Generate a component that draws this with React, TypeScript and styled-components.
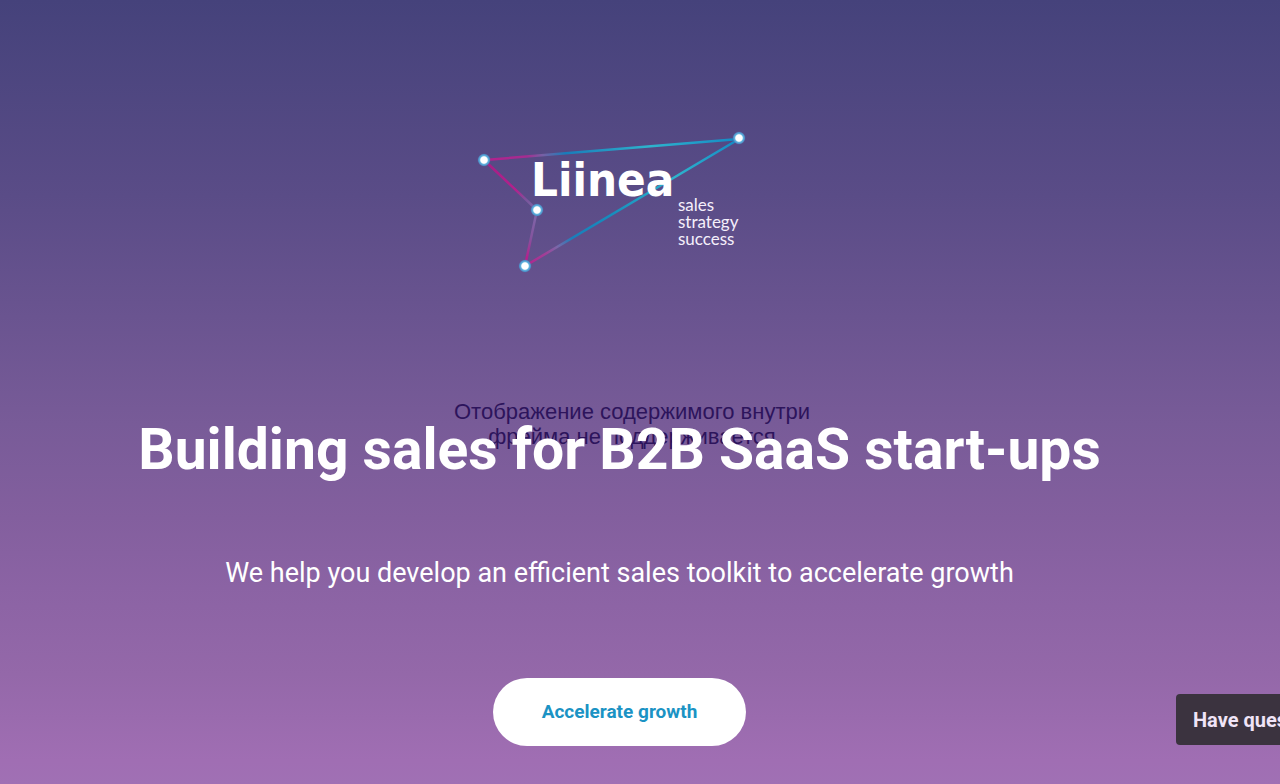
import React from "react";
import styled, { createGlobalStyle } from "styled-components";

const GlobalStyle = createGlobalStyle`
  *, *::before, *::after { box-sizing: border-box; }
  body {
    margin: 0;
    font-family: Roboto, "Open Sans", sans-serif;
  }
`;

const Hero = styled.main`
  position: relative;
  min-height: 100vh;
  padding: 126px 41px 38px 0;
  display: flex;
  flex-direction: column;
  align-items: center;
  overflow: hidden;
  color: #fff;
  text-align: center;
  background: linear-gradient(180deg, #45427b 0%, #5a4c87 25%, #785b98 54%, #835f9e 66%, #8b63a4 75%, #9468a9 86%, #a06eb3 97%, #a070b4 100%);
`;

const Logo = styled.svg`
  display: block;
  width: 280px;
  height: 152px;
  flex: none;
  overflow: visible;
`;

const Wordmark = styled.text`
  font: 700 47px "DejaVu Sans Condensed", "DejaVu Sans", sans-serif;
  fill: #fff;
`;

const Tagline = styled.text`
  font: 400 17px Lato, sans-serif;
  fill: #f5effb;
`;

const FrameNotice = styled.p`
  position: absolute;
  top: 399px;
  left: 0;
  right: 16px;
  margin: 0 auto;
  width: 360px;
  font: 400 22px/25px "Liberation Sans", Arial, sans-serif;
  color: #2d145c;
`;

const Title = styled.h1`
  position: relative;
  margin: 138px 0 0;
  font-size: 57px;
  font-weight: 700;
  line-height: 68px;
`;

const Subtitle = styled.p`
  margin: 72px 0 0;
  font-size: 27px;
  font-weight: 400;
  line-height: 34px;
  color: #fff;
`;

const Cta = styled.button`
  margin-top: 88px;
  padding: 0 49px;
  height: 68px;
  border: 0;
  border-radius: 34px;
  background: #fff;
  color: #1b93c4;
  font: 700 19px/24px Roboto, sans-serif;
  cursor: pointer;
`;

const ChatButton = styled.button`
  position: absolute;
  right: -72px;
  bottom: 39px;
  width: 176px;
  height: 51px;
  padding: 0 17px;
  border: 0;
  border-radius: 4px;
  background: #3b333f;
  color: #f0e4f7;
  font: 700 20px/24px Roboto, sans-serif;
  text-align: left;
  white-space: nowrap;
  cursor: pointer;
`;

const nodes = [
  [4, 34],
  [259, 12],
  [57, 84],
  [45, 140],
];

const taglines = ["sales", "strategy", "success"];

function LiineaLogo() {
  return (
    <Logo viewBox="0 0 280 152" role="img" aria-label="Liinea: sales, strategy, success">
      <defs>
        <linearGradient id="top" gradientUnits="userSpaceOnUse" x1="4" y1="34" x2="259" y2="12">
          <stop offset="0" stopColor="#b5208d" />
          <stop offset="0.17" stopColor="#a32d91" />
          <stop offset="0.23" stopColor="#7760a5" />
          <stop offset="0.32" stopColor="#187cba" />
          <stop offset="0.65" stopColor="#2eb4cd" />
          <stop offset="1" stopColor="#1389c5" />
        </linearGradient>
        <linearGradient id="long" gradientUnits="userSpaceOnUse" x1="45" y1="140" x2="259" y2="12">
          <stop offset="0" stopColor="#b5208d" />
          <stop offset="0.1" stopColor="#a04198" />
          <stop offset="0.15" stopColor="#7b68a9" />
          <stop offset="0.22" stopColor="#1a7fbb" />
          <stop offset="0.4" stopColor="#168dbd" />
          <stop offset="0.7" stopColor="#2eb4cd" />
          <stop offset="1" stopColor="#1389c5" />
        </linearGradient>
        <linearGradient id="left" gradientUnits="userSpaceOnUse" x1="4" y1="34" x2="57" y2="84">
          <stop offset="0" stopColor="#a51e85" />
          <stop offset="0.6" stopColor="#b5208d" />
          <stop offset="0.8" stopColor="#79559c" />
          <stop offset="1" stopColor="#8068a8" />
        </linearGradient>
        <linearGradient id="short" gradientUnits="userSpaceOnUse" x1="57" y1="84" x2="45" y2="140">
          <stop offset="0" stopColor="#7d69aa" />
          <stop offset="0.5" stopColor="#84549e" />
          <stop offset="0.85" stopColor="#b5208d" />
        </linearGradient>
        <radialGradient id="node">
          <stop offset="0.5" stopColor="#fff" />
          <stop offset="0.65" stopColor="#65b6e0" />
          <stop offset="0.85" stopColor="#4d91c8" />
          <stop offset="1" stopColor="#5d72b1" stopOpacity="0.3" />
        </radialGradient>
      </defs>
      <g fill="none" strokeWidth="2.5">
        <path d="M5 34 259 13" stroke="url(#top)" />
        <path d="M45 140 259 13" stroke="url(#long)" />
        <path d="M4 34 57 84" stroke="url(#left)" />
        <path d="M57 84 45 140" stroke="url(#short)" />
      </g>
      {nodes.map(([x, y]) => (
        <circle key={x} cx={x} cy={y} r="6.5" fill="url(#node)" />
      ))}
      <Wordmark x="51" y="70">Liinea</Wordmark>
      {taglines.map((word, i) => (
        <Tagline key={word} x="198" y={85 + i * 17}>{word}</Tagline>
      ))}
    </Logo>
  );
}

export default function App() {
  return (
    <>
      <GlobalStyle />
      <Hero>
        <FrameNotice lang="ru">Отображение содержимого внутри фрейма не поддерживается</FrameNotice>
        <LiineaLogo />
        <Title>Building sales for B2B SaaS start-ups</Title>
        <Subtitle>We help you develop an efficient sales toolkit to accelerate growth</Subtitle>
        <Cta type="button">Accelerate growth</Cta>
        <ChatButton type="button">Have questions?</ChatButton>
      </Hero>
    </>
  );
}
